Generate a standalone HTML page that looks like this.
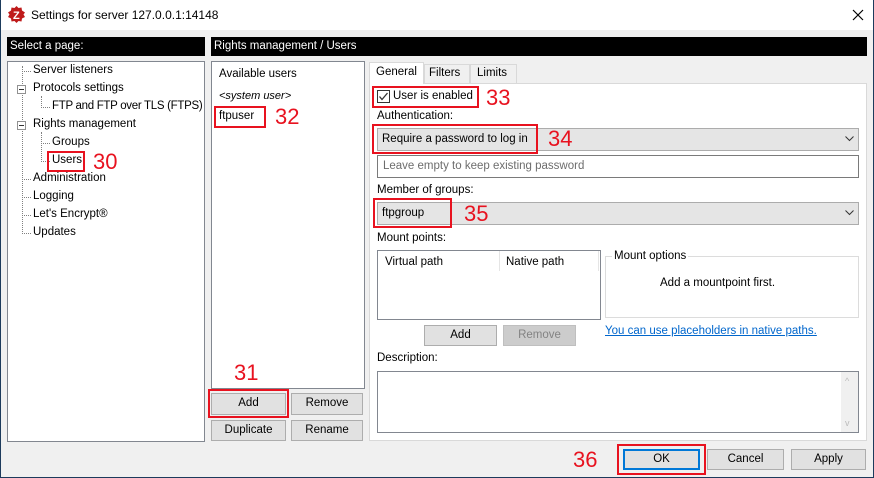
<!DOCTYPE html>
<html><head><meta charset="utf-8"><style>
*{box-sizing:border-box;margin:0;padding:0}
body{width:874px;height:478px;overflow:hidden;background:#f0f0f0;font-family:"Liberation Sans",sans-serif;font-size:11.5px;color:#000;position:relative}
.a{position:absolute;white-space:nowrap}
.win{position:absolute;left:0;top:0;width:874px;height:478px;border:1px solid #1d3b5c;border-top:none}
.white{background:#fff}
.box{position:absolute;background:#fff;border:1px solid #828790}
.hdr{position:absolute;background:#000;color:#fff;height:19px;line-height:19px;padding-left:3px;font-size:11.5px}
.btn{position:absolute;background:#e1e1e1;border:1px solid #adadad;text-align:center;line-height:19px;font-size:11.5px}
.red{position:absolute;border:2px solid #e8121f}
.num{position:absolute;color:#e8121f;font-size:22px;line-height:22px}
.combo{position:absolute;background:#e5e5e5;border:1px solid #acacac;height:23px;line-height:21px;padding-left:4px}
.dots{position:absolute;border-left:1px dotted #808080}
.hd{position:absolute;border-top:1px dotted #808080}
.pm{position:absolute;width:9px;height:9px;border:1px solid #919191;background:#fff}
.pm:after{content:"";position:absolute;left:1px;top:3px;width:5px;height:1px;background:#333}
</style></head><body>
<div class="a white" style="left:0;top:0;width:874px;height:30px"></div>
<svg class="a" style="left:8px;top:6px" width="17" height="17" viewBox="0 0 17 17"><polygon points="8.5,0 10.5,2 13.5,1.5 14,4.5 17,6.5 15.5,8.5 17,11 14,12.5 13.5,15.5 10.5,15 8.5,17 6.5,15 3.5,15.5 3,12.5 0,11 1.5,8.5 0,6.5 3,4.5 3.5,1.5 6.5,2" fill="#bf1b1b"/><text x="5" y="13" fill="#fff" font-size="11" font-weight="bold" font-family="Liberation Sans">Z</text></svg>
<div class="a" style="left:31px;top:8px;font-size:12px">Settings for server 127.0.0.1:14148</div>
<svg class="a" style="left:852px;top:9px" width="12" height="12"><path d="M1 1L11 11M11 1L1 11" stroke="#000" stroke-width="1.2"/></svg>

<div class="hdr" style="left:7px;top:37px;width:198px">Select a page:</div>
<div class="hdr" style="left:211px;top:37px;width:656px">Rights management / Users</div>

<div class="box" style="left:7px;top:61px;width:198px;height:381px"></div>
<div class="dots" style="left:22px;top:66px;height:168px"></div>
<div class="dots" style="left:41px;top:96px;height:12px"></div>
<div class="dots" style="left:41px;top:132px;height:30px"></div>
<div class="hd" style="left:22px;top:71px;width:9px"></div>
<div class="hd" style="left:41px;top:107px;width:9px"></div>
<div class="hd" style="left:41px;top:143px;width:9px"></div>
<div class="hd" style="left:41px;top:161px;width:9px"></div>
<div class="hd" style="left:22px;top:179px;width:9px"></div>
<div class="hd" style="left:22px;top:197px;width:9px"></div>
<div class="hd" style="left:22px;top:215px;width:9px"></div>
<div class="hd" style="left:22px;top:233px;width:9px"></div>
<div class="pm" style="left:17px;top:85px"></div>
<div class="pm" style="left:17px;top:121px"></div>
<div class="a" style="left:33px;top:64px">Server listeners</div>
<div class="a" style="left:33px;top:82px">Protocols settings</div>
<div class="a" style="left:52px;top:100px;letter-spacing:-0.3px">FTP and FTP over TLS (FTPS)</div>
<div class="a" style="left:33px;top:118px">Rights management</div>
<div class="a" style="left:52px;top:136px">Groups</div>
<div class="a" style="left:52px;top:154px">Users</div>
<div class="red" style="left:47px;top:151px;width:38px;height:21px"></div>
<div class="num" style="left:93px;top:151px">30</div>
<div class="a" style="left:33px;top:172px">Administration</div>
<div class="a" style="left:33px;top:190px">Logging</div>
<div class="a" style="left:33px;top:208px">Let's Encrypt®</div>
<div class="a" style="left:33px;top:226px">Updates</div>

<div class="box" style="left:211px;top:61px;width:154px;height:328px"></div>
<div class="a" style="left:219px;top:68px">Available users</div>
<div class="a" style="left:219px;top:90px;font-style:italic;font-size:11px">&lt;system user&gt;</div>
<div class="a" style="left:219px;top:110px">ftpuser</div>
<div class="red" style="left:214px;top:106px;width:52px;height:22px"></div>
<div class="num" style="left:275px;top:106px">32</div>
<div class="num" style="left:234px;top:362px">31</div>
<div class="btn" style="left:211px;top:393px;width:75px;height:22px">Add</div>
<div class="red" style="left:208px;top:389px;width:81px;height:29px"></div>
<div class="btn" style="left:291px;top:393px;width:72px;height:22px">Remove</div>
<div class="btn" style="left:211px;top:420px;width:75px;height:21px">Duplicate</div>
<div class="btn" style="left:291px;top:420px;width:72px;height:21px">Rename</div>

<div class="a" style="left:369px;top:83px;width:498px;height:358px;background:#fff;border:1px solid #d9d9d9"></div>
<div class="a" style="left:369px;top:62px;width:55px;height:22px;background:#fff;border:1px solid #d9d9d9;border-bottom:none;padding:3px 0 0 6px">General</div>
<div class="a" style="left:424px;top:64px;width:46px;height:19px;background:#f0f0f0;border:1px solid #d9d9d9;border-bottom:none;padding:2px 0 0 4px">Filters</div>
<div class="a" style="left:470px;top:64px;width:47px;height:19px;background:#f0f0f0;border:1px solid #d9d9d9;border-bottom:none;padding:2px 0 0 6px">Limits</div>

<div class="a" style="left:377px;top:90px;width:13px;height:13px;border:1px solid #333;background:#fff"></div>
<svg class="a" style="left:378px;top:91px" width="11" height="11"><path d="M1.5 5.5L4 8.5L9.5 2" stroke="#333" stroke-width="1.3" fill="none"/></svg>
<div class="a" style="left:393px;top:90px">User is enabled</div>
<div class="red" style="left:372px;top:86px;width:107px;height:22px"></div>
<div class="num" style="left:486px;top:87px">33</div>
<div class="a" style="left:377px;top:110px">Authentication:</div>
<div class="combo" style="left:377px;top:128px;width:482px">Require a password to log in</div>
<svg class="a" style="left:845px;top:136px" width="9" height="6"><path d="M0.5 0.5L4.5 4.5L8.5 0.5" stroke="#333" fill="none"/></svg>
<div class="red" style="left:372px;top:124px;width:166px;height:30px"></div>
<div class="num" style="left:548px;top:128px">34</div>
<div class="a" style="left:377px;top:155px;width:482px;height:23px;border:1px solid #7a7a7a;background:#fff;padding:4px 0 0 5px;color:#6d6d6d">Leave empty to keep existing password</div>
<div class="a" style="left:377px;top:184px">Member of groups:</div>
<div class="combo" style="left:377px;top:202px;width:482px">ftpgroup</div>
<svg class="a" style="left:845px;top:210px" width="9" height="6"><path d="M0.5 0.5L4.5 4.5L8.5 0.5" stroke="#333" fill="none"/></svg>
<div class="red" style="left:373px;top:198px;width:79px;height:30px"></div>
<div class="num" style="left:464px;top:203px">35</div>
<div class="a" style="left:377px;top:232px">Mount points:</div>
<div class="a" style="left:377px;top:250px;width:224px;height:70px;border:1px solid #828790;background:#fff"></div>
<div class="a" style="left:385px;top:256px">Virtual path</div>
<div class="a" style="left:499px;top:251px;height:20px;border-left:1px solid #e5e5e5"></div>
<div class="a" style="left:506px;top:256px">Native path</div>
<div class="a" style="left:598px;top:251px;height:20px;border-left:1px solid #e5e5e5"></div>
<div class="a" style="left:605px;top:256px;width:254px;height:62px;border:1px solid #dcdcdc"></div>
<div class="a" style="left:612px;top:250px;background:#fff;padding:0 2px">Mount options</div>
<div class="a" style="left:660px;top:277px">Add a mountpoint first.</div>
<div class="btn" style="left:424px;top:325px;width:73px;height:21px">Add</div>
<div class="btn" style="left:503px;top:325px;width:73px;height:21px;background:#ccc;border-color:#bfbfbf;color:#838383">Remove</div>
<div class="a" style="left:605px;top:325px;color:#0066cc;text-decoration:underline">You can use placeholders in native paths.</div>
<div class="a" style="left:377px;top:352px">Description:</div>
<div class="a" style="left:377px;top:371px;width:482px;height:62px;border:1px solid #828790;background:#fff"></div>
<div class="a" style="left:841px;top:372px;width:17px;height:60px;background:#f0f0f0"></div>
<div class="a" style="left:845px;top:376px;color:#bbb;font-size:9px">^</div>
<div class="a" style="left:845px;top:418px;color:#bbb;font-size:9px">v</div>

<div class="num" style="left:573px;top:449px">36</div>
<div class="btn" style="left:623px;top:449px;width:77px;height:21px;border:2px solid #0078d7;line-height:17px">OK</div>
<div class="red" style="left:617px;top:444px;width:89px;height:31px"></div>
<div class="btn" style="left:707px;top:449px;width:77px;height:21px">Cancel</div>
<div class="btn" style="left:791px;top:449px;width:75px;height:21px">Apply</div>
<div class="win"></div>
</body></html>
